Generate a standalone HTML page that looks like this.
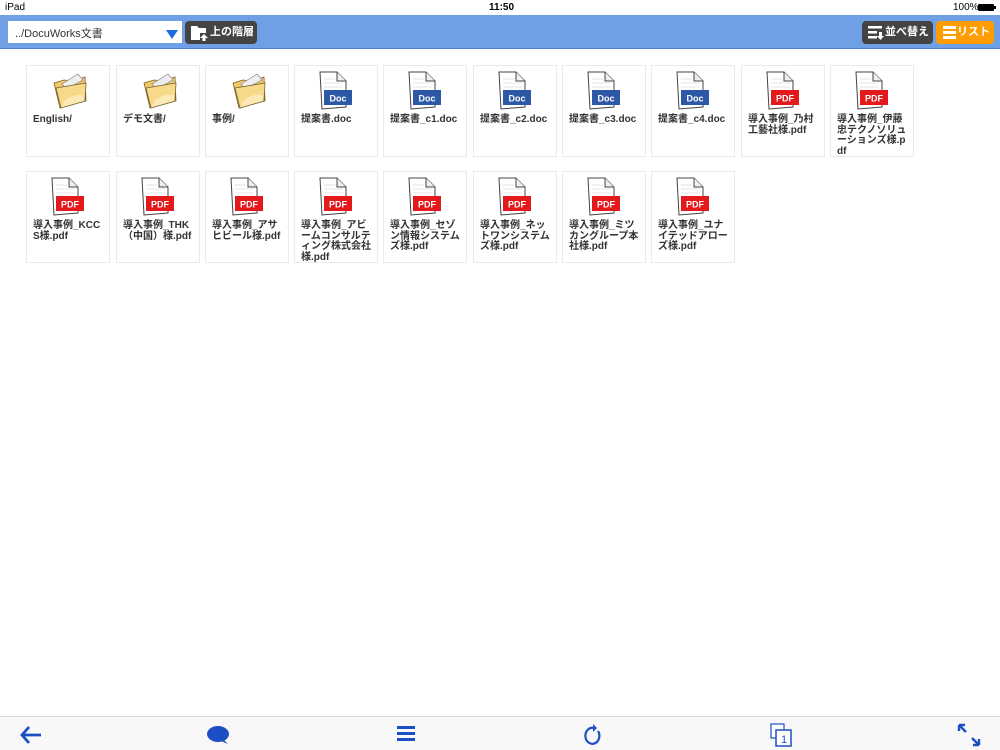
<!DOCTYPE html>
<html><head><meta charset="utf-8"><style>
*{margin:0;padding:0;box-sizing:border-box}
body{width:1000px;height:750px;background:#fff;font-family:"Liberation Sans","Noto Sans CJK JP",sans-serif;position:relative;overflow:hidden}
.status{height:15px;font-size:10px;color:#000;position:relative}
.bar{position:absolute;top:15px;left:0;width:1000px;height:34px;background:#6fa0e6;border-bottom:1px solid #4d80cc}
.sel{position:absolute;left:8px;top:6px;width:174px;height:22px;background:#fff;font-size:11px;color:#333;padding:4px 0 0 7px;white-space:nowrap}
.sel:after{content:"";position:absolute;right:4px;top:9px;border-left:6px solid transparent;border-right:6px solid transparent;border-top:9px solid #1b6ae0}
.btn{position:absolute;top:6px;height:23px;border-radius:4px;color:#fff;font-weight:bold;font-size:11px;line-height:13px;padding:5px 0 0 0;white-space:nowrap}
.tile{position:absolute;width:84px;height:92px;border:1px solid #eaeaea;background:#fff}
.lbl{position:absolute;left:6px;top:49px;font-size:10px;line-height:10.5px;font-weight:bold;color:#333;white-space:nowrap}
.ic{position:absolute;left:22px;top:4px}
.foot{position:absolute;top:716px;left:0;width:1000px;height:34px;background:#f8f8f8;border-top:1px solid #ddd}
</style></head><body>
<div class="status"><span style="position:absolute;left:5px;top:2px">iPad</span><span style="position:absolute;left:489px;top:2px;font-weight:bold">11:50</span><span style="position:absolute;left:953px;top:2px">100%</span><span style="position:absolute;left:978px;top:4px;width:16px;height:7px;background:#000;border-radius:1px"></span><span style="position:absolute;left:994px;top:6px;width:2px;height:3px;background:#000"></span></div>
<div class="bar">
<div class="sel">../DocuWorks文書</div>
<div class="btn" style="left:185px;width:72px;background:#444"><svg style="position:absolute;left:6px;top:4px" width="18" height="16" viewBox="0 0 18 16"><path d="M0 1h6l2 2h7v5h-6v7H0z" fill="#fff"/><path d="M13 9l4 4h-2.5v3h-3v-3H9z" fill="#fff"/></svg><span style="position:absolute;left:25px">上の階層</span></div>
<div class="btn" style="left:862px;width:71px;background:#444"><svg style="position:absolute;left:6px;top:5px" width="16" height="14" viewBox="0 0 16 14"><rect x="0" y="0" width="14" height="2.5" fill="#fff"/><rect x="0" y="5" width="9" height="2.5" fill="#fff"/><rect x="0" y="10" width="9" height="2.5" fill="#fff"/><path d="M11 6h3v4h2l-3.5 4-3.5-4h2z" fill="#fff"/></svg><span style="position:absolute;left:23px">並べ替え</span></div>
<div class="btn" style="left:936px;width:58px;background:#ff9c00"><svg style="position:absolute;left:7px;top:5px" width="13" height="13" viewBox="0 0 13 13"><rect y="0" width="13" height="3" fill="#fff"/><rect y="5" width="13" height="3" fill="#fff"/><rect y="10" width="13" height="3" fill="#fff"/></svg><span style="position:absolute;left:21px">リスト</span></div>
</div>

<svg width="0" height="0" style="position:absolute"><defs>
<g id="fold"><path d="M2 12 L12 9 L22 10 L33 6 L34 30 L8 37 Z" fill="#f0c866" stroke="#7a6230" stroke-width="0.8"/><path d="M10 13 L26 3 L31 9 L14 18 Z" fill="#eee" stroke="#888" stroke-width="0.7"/><path d="M4 17 L34 12 L33 30 L9 37 Z" fill="#f7d98a" stroke="#7a6230" stroke-width="0.8"/><path d="M12 30 Q22 22 32 24 L32 30 L10 36Z" fill="#fce9b5"/></g>
<g id="page"><path d="M1 1 L18 1 L27 10 L27 36 L3 38 Z" fill="#fff" stroke="#444" stroke-width="1"/><path d="M18 1 L18 10 L27 10" fill="#eee" stroke="#444" stroke-width="1"/><g stroke="#ccc" stroke-width="0.6"><line x1="5" y1="8" x2="16" y2="8"/><line x1="5" y1="12" x2="24" y2="12"/><line x1="5" y1="16" x2="24" y2="16"/><line x1="5" y1="20" x2="24" y2="20"/><line x1="5" y1="24" x2="24" y2="24"/><line x1="5" y1="28" x2="24" y2="28"/><line x1="5" y1="32" x2="24" y2="32"/></g></g>
</defs></svg>

<div id="grid"></div>

<div class="foot">
<svg style="position:absolute;left:20px;top:8px" width="22" height="20" viewBox="0 0 22 20"><path d="M9 2 L2 10 L9 18 M2 10 H21" stroke="#1d4fc4" stroke-width="2.8" fill="none"/></svg>
<svg style="position:absolute;left:207px;top:9px" width="24" height="18" viewBox="0 0 24 18"><ellipse cx="11" cy="8" rx="11" ry="8" fill="#1d4fc4"/><path d="M16 13 L21 18 L14 15Z" fill="#1d4fc4"/></svg>
<svg style="position:absolute;left:397px;top:9px" width="18" height="16" viewBox="0 0 18 16"><rect y="0" width="18" height="3" fill="#1d4fc4"/><rect y="6" width="18" height="3" fill="#1d4fc4"/><rect y="12" width="18" height="3" fill="#1d4fc4"/></svg>
<svg style="position:absolute;left:584px;top:6px" width="18" height="22" viewBox="0 0 18 22"><path d="M10 5 A7 8 0 1 0 14 8" stroke="#1d4fc4" stroke-width="2.2" fill="none"/><path d="M9 1 L13 5 L9 9Z" fill="#1d4fc4"/></svg>
<svg style="position:absolute;left:770px;top:6px" width="24" height="24" viewBox="0 0 24 24"><rect x="1" y="1" width="13" height="14" fill="#fff" stroke="#1d4fc4" stroke-width="1.2"/><rect x="6" y="7" width="15" height="16" fill="#fff" stroke="#1d4fc4" stroke-width="1.5"/><text x="11" y="20" font-size="11" fill="#1d4fc4" font-family="Liberation Sans">1</text></svg>
<svg style="position:absolute;left:957px;top:6px" width="24" height="24" viewBox="0 0 24 24"><path d="M2 2 L9 9 M2 2 h6 M2 2 v6 M22 22 L15 15 M22 22 h-6 M22 22 v-6" stroke="#1d4fc4" stroke-width="2.4" fill="none"/></svg>
</div>

<script>
const xs=[26,116,205,294,383,473,562,651,741,830];
const items=[
['f',['English/']],['f',['デモ文書/']],['f',['事例/']],
['d',['提案書.doc']],['d',['提案書_c1.doc']],['d',['提案書_c2.doc']],['d',['提案書_c3.doc']],['d',['提案書_c4.doc']],
['p',['導入事例_乃村','工藝社様.pdf']],['p',['導入事例_伊藤','忠テクノソリュ','ーションズ様.p','df']],
['p',['導入事例_KCC','S様.pdf']],['p',['導入事例_THK','（中国）様.pdf']],['p',['導入事例_アサ','ヒビール様.pdf']],
['p',['導入事例_アビ','ームコンサルテ','ィング株式会社','様.pdf']],['p',['導入事例_セゾ','ン情報システム','ズ様.pdf']],
['p',['導入事例_ネッ','トワンシステム','ズ様.pdf']],['p',['導入事例_ミツ','カングループ本','社様.pdf']],['p',['導入事例_ユナ','イテッドアロー','ズ様.pdf']]];
let h='';
items.forEach((it,i)=>{const x=xs[i%10],y=i<10?65:171;
let ic='';
if(it[0]=='f')ic='<svg class="ic" style="left:25px;top:5px" width="36" height="40"><use href="#fold"/></svg>';
else{const c=it[0]=='d'?'#2c58a6':'#e3191c',t=it[0]=='d'?'Doc':'PDF';
ic='<svg class="ic" style="left:24px;top:5px" width="34" height="40"><use href="#page"/><rect x="5" y="19" width="28" height="15" fill="'+c+'"/><text x="19" y="30.5" text-anchor="middle" font-size="9" font-weight="bold" fill="#fff" font-family="Liberation Sans">'+t+'</text></svg>';}
h+='<div class="tile" style="left:'+x+'px;top:'+y+'px">'+ic+'<div class="lbl">'+it[1].join('<br>')+'</div></div>';});
document.getElementById('grid').innerHTML=h;
</script>
</body></html>
